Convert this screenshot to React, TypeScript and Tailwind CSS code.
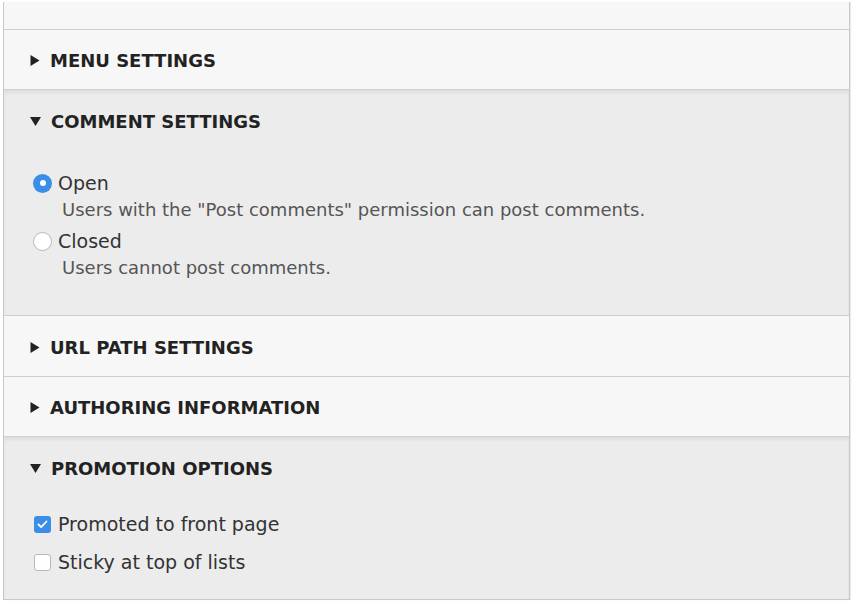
import React from 'react'

const font = { fontFamily: '"DejaVu Sans", "Open Sans", sans-serif' }

function Caret({ open }: { open: boolean }) {
  return open ? (
    <svg width="11" height="9" viewBox="0 0 11 9" className="shrink-0">
      <path d="M0 0 L11 0 L5.5 9 Z" fill="#222" />
    </svg>
  ) : (
    <svg width="10" height="11" viewBox="0 0 10 11" className="shrink-0">
      <path d="M0.5 0 L9.5 5.5 L0.5 11 Z" fill="#222" />
    </svg>
  )
}

function Summary({ title, open, h }: { title: string; open: boolean; h: string }) {
  return (
    <div className={`flex items-center gap-[10px] pl-[26px] pt-[2px] ${h}`}>
      <Caret open={open} />
      <span className="text-[18px] font-bold uppercase text-[#222]">{title}</span>
    </div>
  )
}

function Radio({ checked }: { checked: boolean }) {
  return checked ? (
    <span className="flex h-[19px] w-[19px] shrink-0 items-center justify-center rounded-full bg-[#3b8ee8]">
      <span className="h-[6px] w-[6px] rounded-full bg-white" />
    </span>
  ) : (
    <span className="h-[19px] w-[19px] shrink-0 rounded-full border border-[#b8b8b8] bg-white" />
  )
}

function Checkbox({ checked }: { checked: boolean }) {
  return checked ? (
    <span className="flex h-[17px] w-[17px] shrink-0 items-center justify-center rounded-[3px] bg-[#3b8ee8]">
      <svg width="11" height="9" viewBox="0 0 11 9">
        <path d="M1.5 4.5 L4.2 7.2 L9.5 1.5" stroke="white" strokeWidth="1.8" fill="none" strokeLinecap="round" strokeLinejoin="round" />
      </svg>
    </span>
  ) : (
    <span className="h-[17px] w-[17px] shrink-0 rounded-[3px] border border-[#b8b8b8] bg-white" />
  )
}

export default function App() {
  const options = [
    { label: 'Open', desc: 'Users with the "Post comments" permission can post comments.', checked: true },
    { label: 'Closed', desc: 'Users cannot post comments.', checked: false },
  ]
  const flags = [
    { label: 'Promoted to front page', checked: true },
    { label: 'Sticky at top of lists', checked: false },
  ]

  return (
    <div className="h-[602px] w-[853px] overflow-hidden bg-white pl-[3px] pr-[3px] pt-[2px]" style={font}>
      <div className="border-x border-b border-[#c8c8c8] bg-[#f7f7f7] shadow-[1px_0_1px_rgba(0,0,0,0.08)]">
        <div className="h-[28px] border-b border-[#cfcfcf]" />

        <div className="border-b border-[#cfcfcf]">
          <Summary title="Menu settings" open={false} h="h-[59px]" />
        </div>

        <div className="border-b border-[#cfcfcf] bg-[#ececec] shadow-[inset_0_3px_3px_rgba(0,0,0,0.06)]">
          <Summary title="Comment settings" open={true} h="h-[61px]" />
          <div className="pb-[36px] pl-[29px] pt-[20px]">
            {options.map((o, i) => (
              <div key={o.label} className={i > 0 ? 'mt-[8px]' : ''}>
                <div className="flex h-[24px] items-center gap-[6px]">
                  <Radio checked={o.checked} />
                  <span className="text-[19px] text-[#333]">{o.label}</span>
                </div>
                <div className="mt-[4px] h-[22px] pl-[29px] text-[18px] leading-[22px] text-[#555]">{o.desc}</div>
              </div>
            ))}
          </div>
        </div>

        <div className="border-b border-[#cfcfcf]">
          <Summary title="URL path settings" open={false} h="h-[60px]" />
        </div>

        <div className="border-b border-[#cfcfcf]">
          <Summary title="Authoring information" open={false} h="h-[59px]" />
        </div>

        <div className="bg-[#ececec] shadow-[inset_0_3px_3px_rgba(0,0,0,0.06)]">
          <Summary title="Promotion options" open={true} h="h-[61px]" />
          <div className="pb-[25px] pl-[30px] pt-[14px]">
            {flags.map((f, i) => (
              <div key={f.label} className={`flex h-[24px] items-center gap-[7px] ${i > 0 ? 'mt-[14px]' : ''}`}>
                <Checkbox checked={f.checked} />
                <span className="text-[19px] text-[#333]">{f.label}</span>
              </div>
            ))}
          </div>
        </div>
      </div>
    </div>
  )
}
